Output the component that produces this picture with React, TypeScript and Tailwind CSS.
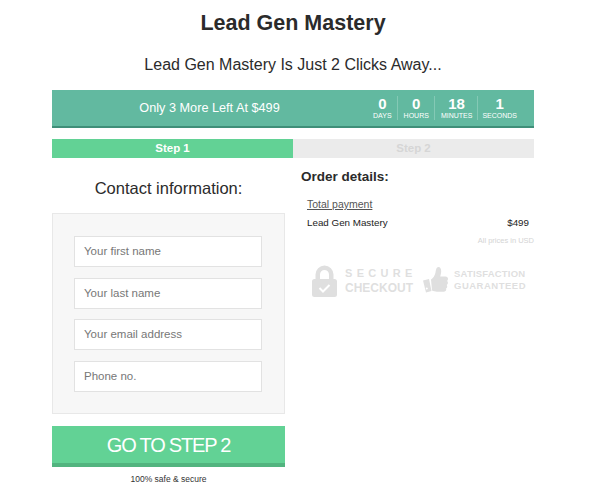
import React from 'react';

const timer = [
  { value: '0', label: 'DAYS' },
  { value: '0', label: 'HOURS' },
  { value: '18', label: 'MINUTES' },
  { value: '1', label: 'SECONDS' },
];

const fields = ['Your first name', 'Your last name', 'Your email address', 'Phone no.'];

function LockIcon() {
  return (
    <svg width="25" height="32" viewBox="0 0 25 32" fill="#dfdfdf">
      <path fillRule="evenodd" d="M3.500 14V9.500a9 9 0 0 1 18 0V14h1a2.500 2.500 0 0 1 2.500 2.500v13a2.500 2.500 0 0 1-2.500 2.500h-20A2.500 2.500 0 0 1 0 29.500v-13A2.500 2.500 0 0 1 2.500 14h1zm4.500 0h9V9.500a4.500 4.500 0 0 0-9 0V14z" />
      <path d="M7.500 23l3.500 3.500 6.500-6.500" fill="none" stroke="#fff" strokeWidth="2" />
    </svg>
  );
}

function ThumbIcon() {
  return (
    <svg width="25" height="26" viewBox="0 0 25 26" fill="#dfdfdf">
      <path fillRule="evenodd" d="M0 13.500l6-1.500 2.500 12-5.500 1.500zM3.600 20.500a1 1 0 1 0 .4 2 1 1 0 0 0-.4-2z" />
      <path d="M8 12.500c2.200-1.500 3.800-3.800 4.500-7 .4-2.500 1-5.500 2.800-5.500 2 0 2.900 2 2.900 4.200 0 1.800-.5 3.300-1 5.300h5.300c1.600 0 2.500 1.100 2.500 2.400 0 .8-.4 1.500-.9 2 .5.500.8 1.200.8 1.900 0 .9-.5 1.700-1.200 2.100.3.500.5 1 .5 1.600 0 .9-.5 1.600-1.200 2 .1.300.2.600.2 1 0 1.400-1.100 2.200-2.400 2.200H14c-1.800 0-3.500-.6-5-1.200z" />
    </svg>
  );
}

export default function App() {
  return (
    <div className="w-[600px] h-[499px] overflow-hidden bg-white font-['Liberation_Sans',sans-serif] text-[#2b2b2b]">
      <div className="w-[482px] ml-[52px] flex flex-col">
        <h1 className="h-[46px] pt-[9px] text-center text-[21.500px] leading-[28px] font-bold">Lead Gen Mastery</h1>
        <h2 className="h-[44px] pt-[9px] text-center text-[16px] leading-[20px]">Lead Gen Mastery Is Just 2 Clicks Away...</h2>

        <div className="h-[38px] flex items-center justify-between bg-[#62b9a0] border-b-2 border-[#3f8f79] text-white">
          <div className="w-[325px] pt-[2px] text-center text-[12.700px]">Only 3 More Left At $499</div>
          <div className="flex items-center pr-[17px]">
            {timer.map((t, i) => (
              <div
                key={t.label}
                className={
                  'flex flex-col items-center h-[24px] ' +
                  (i < 3 ? 'px-[6px] border-r border-[#84c9b5] pr-[5px]' : 'pl-[4px]')
                }
              >
                <span className="text-[15px] leading-[15px] font-bold">{t.value}</span>
                <span className="text-[7px] leading-[9px]">{t.label}</span>
              </div>
            ))}
          </div>
        </div>

        <div className="mt-[11px] h-[19px] flex text-[11.500px] font-bold">
          <div className="w-[241px] flex items-center justify-center bg-[#62d295] text-white">Step 1</div>
          <div className="flex-1 flex items-center justify-center bg-[#ebebeb] text-[#d6d6d6]">Step 2</div>
        </div>

        <div className="flex">
          <div className="w-[233px] shrink-0">
            <h3 className="h-[55px] pt-[20px] text-center text-[16.500px] leading-[20px]">Contact information:</h3>
            <div className="h-[201px] bg-[#f7f7f7] border border-[#e8e8e8] pt-[22px] pl-[21px] flex flex-col gap-[10.500px]">
              {fields.map((f) => (
                <div
                  key={f}
                  className="w-[188px] h-[31px] flex items-center pl-[9px] pt-[1px] bg-white border border-[#e2e2e2] text-[11.500px] text-[#777777]"
                >
                  {f}
                </div>
              ))}
            </div>
            <button className="mt-[12px] w-full h-[41px] bg-[#62d295] border-b-[4px] border-[#52b47f] text-white text-[20px] leading-[24px] tracking-[-1.200px]">
              GO TO STEP 2
            </button>
            <p className="mt-[6px] text-center text-[8.500px] leading-[12px] text-[#333333]">100% safe &amp; secure</p>
          </div>

          <div className="ml-[16px] flex-1">
            <h3 className="pt-[10px] text-[13.500px] leading-[18px] font-bold">Order details:</h3>
            <div className="pl-[6px] pr-[5px]">
              <div className="mt-[11px] text-[10.500px] leading-[14px] underline text-[#555555]">Total payment</div>
              <div className="mt-[5px] flex justify-between text-[9.800px] leading-[14px] text-[#222222]">
                <span>Lead Gen Mastery</span>
                <span>$499</span>
              </div>
            </div>
            <div className="mt-[6px] text-right text-[7.500px] leading-[10px] text-[#d4d4d4]">All prices in USD</div>
            <div className="mt-[19px] ml-[11px] flex items-center text-[#dfdfdf] font-bold">
              <LockIcon />
              <div className="ml-[8px] w-[70px]">
                <div className="text-[11px] leading-[15px] tracking-[4.300px]">SECURE</div>
                <div className="text-[12px] leading-[15px]">CHECKOUT</div>
              </div>
              <div className="ml-[8px] mt-[-3px]"><ThumbIcon /></div>
              <div className="ml-[6px] mt-[-2px] text-[9.500px] leading-[12px]">
                <div className="tracking-[0.200px]">SATISFACTION</div>
                <div className="tracking-[0.500px]">GUARANTEED</div>
              </div>
            </div>
          </div>
        </div>
      </div>
    </div>
  );
}
